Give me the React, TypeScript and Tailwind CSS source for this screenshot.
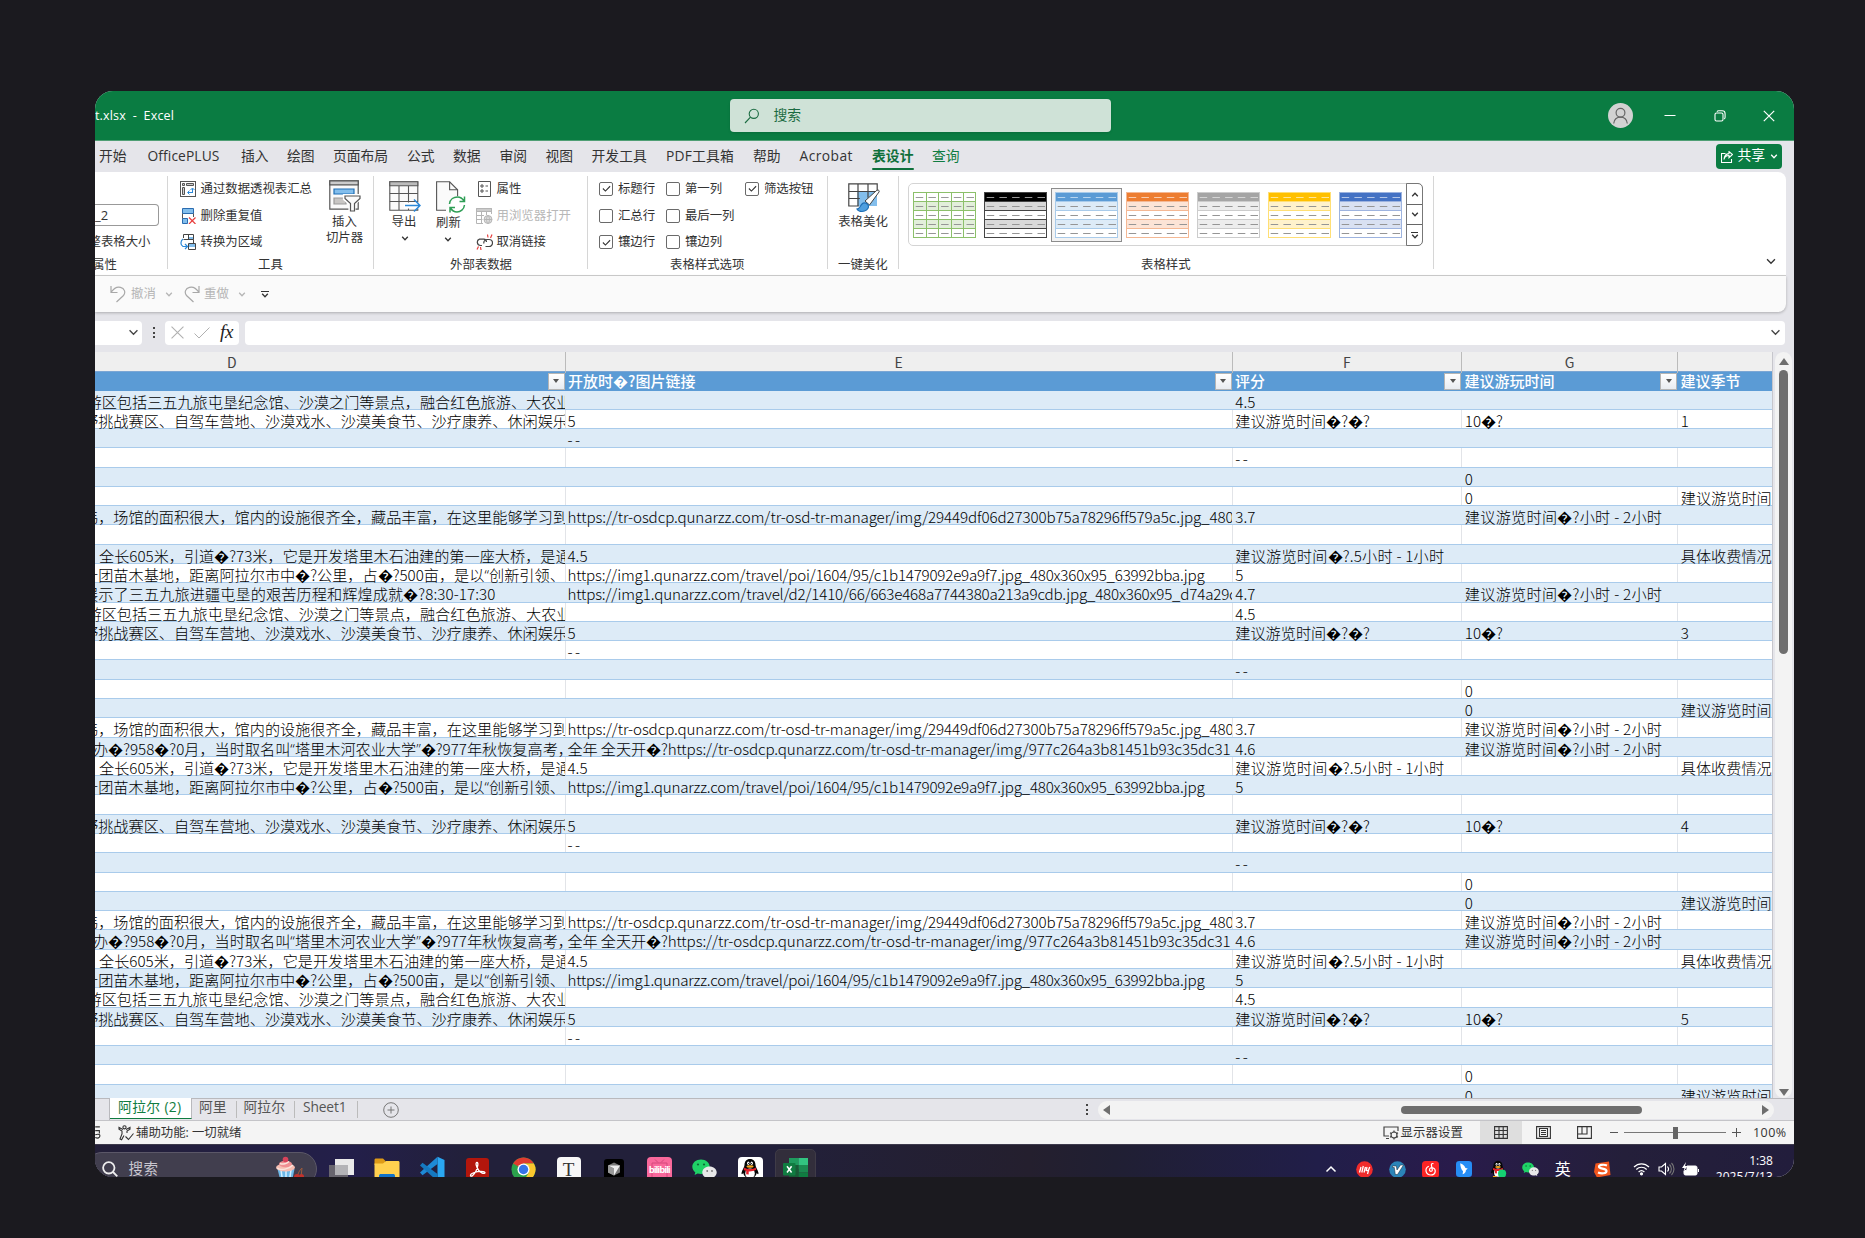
import React, { useLayoutEffect, useRef, useState } from "react";

/* Single-line text whose letter spacing is adjusted so that it is `w` pixels wide. */
function Fit({ w, children, className = "" }: { w: number; children: React.ReactNode; className?: string }) {
  const ref = useRef<HTMLSpanElement>(null);
  const [spacing, setSpacing] = useState(0);
  useLayoutEffect(() => {
    if (ref.current) {
      const natural = ref.current.getBoundingClientRect().width;
      setSpacing((w - natural) / Array.from(ref.current.textContent ?? "").length);
    }
  }, []);
  return (
    <span ref={ref} style={{ letterSpacing: spacing }} className={"inline-block whitespace-pre " + className}>
      {children}
    </span>
  );
}

const Chevron = ({ className = "" }: { className?: string }) => (
  <svg viewBox="0 0 12 8" className={className} fill="none" stroke="currentColor" strokeWidth="1.5">
    <path d="M1.5 1.5 6 6l4.5-4.5" />
  </svg>
);

const TinyChevron = ({ className = "" }: { className?: string }) => (
  <svg viewBox="0 0 8 5" className={"h-[5px] w-[8px] " + className} fill="none" stroke="currentColor" strokeWidth="1.300">
    <path d="M1.200.8 4 3.700 6.800.8" />
  </svg>
);

/* ---------- title bar ---------- */

function TitleBar() {
  return (
    <div className="flex h-[50px] shrink-0 items-center border-b border-[#4f9f75] bg-[#0a7c42] text-white">
      <div className="flex w-[635px] items-center pt-[1px] text-[12.500px] leading-5">
        <Fit w={79}>{"t.xlsx  -  Excel"}</Fit>
      </div>
      <div className="flex h-[33.5px] w-[381px] items-center rounded-[4px] bg-[#cfe2d7] pl-[14px] text-[#1a6b41] shadow-sm">
        <svg viewBox="0 0 16 16" className="mr-[13.5px] h-4 w-4" fill="none" stroke="currentColor" strokeWidth="1.1">
          <circle cx="9.8" cy="5.8" r="4.6" />
          <path d="M6.5 9.2 1 15" />
        </svg>
        <span className="pb-[2px] text-[13.8px] leading-5">搜索</span>
      </div>
      <div className="flex w-[683px] items-center pl-[497px] text-white">
        <svg viewBox="0 0 25 25" className="h-[25px] w-[25px]" fill="none" stroke="#666" strokeWidth="1.2">
          <circle cx="12.5" cy="12.5" r="12.5" fill="#d2d2d2" stroke="none" />
          <circle cx="12.5" cy="9.8" r="4.4" />
          <path d="M5.7 20.5c.5-4 3.200-6.300 6.800-6.300s6.300 2.300 6.800 6.300" />
        </svg>
        <svg viewBox="0 0 12 12" className="ml-[31px] h-3 w-3" fill="none" stroke="currentColor" strokeWidth="1.200">
          <path d="M.5 5.500h11" />
        </svg>
        <svg viewBox="0 0 12 12" className="ml-[38px] h-3 w-3" fill="none" stroke="currentColor" strokeWidth="1.100">
          <rect x="1" y="3" width="8" height="8" rx="1.500" />
          <path d="M3 1.800C3.400 1 4 .8 4.600.8h3.600c1.800 0 2.900 1.100 2.900 2.900v3.600c0 .7-.3 1.300-.9 1.600" />
        </svg>
        <svg viewBox="0 0 12 12" className="ml-[37px] h-3 w-3" fill="none" stroke="currentColor" strokeWidth="1.200">
          <path d="m.8.8 10.400 10.400M11.200.8.8 11.200" />
        </svg>
      </div>
    </div>
  );
}

/* ---------- ribbon tabs ---------- */

const tabs: { t: string; w: number; box: string }[] = [
  { t: "开始", w: 27.6, box: "w-[48.5px]" },
  { t: "OfficePLUS", w: 72, box: "w-[93.500px]" },
  { t: "插入", w: 27.600, box: "w-[46px]" },
  { t: "绘图", w: 27.600, box: "w-[46px]" },
  { t: "页面布局", w: 55, box: "w-[74px]" },
  { t: "公式", w: 27.600, box: "w-[46px]" },
  { t: "数据", w: 27.600, box: "w-[46.500px]" },
  { t: "审阅", w: 27.600, box: "w-[46px]" },
  { t: "视图", w: 27.600, box: "w-[46px]" },
  { t: "开发工具", w: 55.500, box: "w-[74.500px]" },
  { t: "PDF工具箱", w: 68, box: "w-[87px]" },
  { t: "帮助", w: 27.600, box: "w-[46.500px]" },
  { t: "Acrobat", w: 53.500, box: "w-[72.500px]" },
];

function TabRow() {
  return (
    <div className="flex h-[31px] shrink-0 items-center pl-[4px] text-[13.800px] leading-5 text-[#333]">
      {tabs.map((tab) => (
        <div key={tab.t} className={"shrink-0 pb-[2px] " + tab.box}>
          <Fit w={tab.w}>{tab.t}</Fit>
        </div>
      ))}
      <div className="relative w-[60px] pb-[2px] font-bold text-[#0f703b]">
        <Fit w={41.500}>表设计</Fit>
        <div className="absolute bottom-[-2px] left-0 h-[2px] w-[42px] rounded bg-[#0f703b]" />
      </div>
      <div className="pb-[2px] text-[#0f7c41]">
        <Fit w={27.600}>查询</Fit>
      </div>
      <div className="ml-auto mr-[12px] flex h-[25px] w-[66px] items-center rounded-[4px] bg-[#0a7c42] pl-[5px] text-white">
        <svg viewBox="0 0 12 12" className="mr-[4.500px] h-3 w-3" fill="none" stroke="currentColor" strokeWidth="1.100">
          <path d="M4.500 2.500h-4v9h10V8M3 8.500c.5-3 2-4 5-4V6.700l3.500-3.200L8 .6v2C5.300 2.800 3.300 4.500 3 8.500Z" />
        </svg>
        <span className="pb-[3px] leading-5">共享</span>
        <TinyChevron className="ml-[5px]" />
      </div>
    </div>
  );
}

/* ---------- ribbon icons ---------- */

const IconPivot = () => (
  <svg viewBox="0 0 16 16" className="h-4 w-4" fill="none" stroke="#555" strokeWidth="1">
    <rect x=".5" y=".5" width="15" height="15" />
    <path d="M2.500 2.500h2v2h-2zM6.500 2.500h7v2h-7zM2.500 6.500h2v7h-2z" fill="#ccc" />
    <path d="M12.500 12V7.500M10.500 9l2-2 2 2M12.500 11.500H8M9.500 9.700 7.500 11.500l2 2" stroke="#2b88d8" />
  </svg>
);
const IconDedupe = () => (
  <svg viewBox="0 0 16 16" className="h-4 w-4" fill="none" strokeWidth="1">
    <path d="M2.500.5h11v5h-11zM2.500 10.500h5v5h-5z" fill="#83beec" stroke="#2b6cb0" />
    <path d="M2.500 5.500v5M13.500 5.500V9" stroke="#555" />
    <path d="m9 9.500 6.500 6.500M15.500 9.500 9 16" stroke="#e8403f" strokeWidth="1.200" />
  </svg>
);
const IconConvert = () => (
  <svg viewBox="0 0 16 16" className="h-4 w-4" fill="none" stroke="#444" strokeWidth="1">
    <path d="M3.500 4V.5h10v5h-10M8.500.5v5M13.500 5.500v4M8.500 9.500h7v6h-7z" />
    <path d="M9 10h6v3H9zM9 3h4v2H9z" fill="#83beec" stroke="none" />
    <path d="M3 5C.3 7 .2 11 3 12.500h4M5 10l2.500 2.500L5 15" stroke="#2b88d8" strokeWidth="1.200" />
  </svg>
);
const IconSlicer = () => (
  <svg viewBox="0 0 32 32" className="h-8 w-8" fill="none" stroke="#555" strokeWidth="1.200">
    <path d="M.8.8h28.400v28.400H.8z" fill="#fafafa" />
    <path d="M.8.8h28.400v4H.8z" fill="#ccc" />
    <path d="M5 9h20v5H5z" fill="#83beec" stroke="#1f6fb5" />
    <path d="M5 18h12v6H5z" fill="#c8c6c4" stroke="#999" />
    <path d="M14.500 14.500h17v5l-5.500 4.500v8h-6v-8l-5.500-4.500z" fill="#fff" stroke="#fff" />
    <path d="M16 16h15v2.500l-5.500 5V31h-4v-7.500l-5.500-5z" fill="#fafafa" />
  </svg>
);
const IconExport = () => (
  <svg viewBox="0 0 32 32" className="h-8 w-8" fill="none" stroke="#555" strokeWidth="1.100">
    <path d="M.8.8h28v28.400H.8z" fill="#fafafa" />
    <path d="M.8.8h28v4H.8z" fill="#bbb" />
    <path d="M.8 12.500h28M.8 20.500h28M10 5v24M19.500 5v24" />
    <path d="M15 21.500h18v6H15z" fill="#fff" stroke="none" />
    <path d="M16 24.500h14.500M25 18.500l6 6-6 6" stroke="#2b88d8" strokeWidth="1.500" />
  </svg>
);
const IconRefresh = () => (
  <svg viewBox="0 0 32 32" className="h-8 w-8" fill="none" stroke="#555" strokeWidth="1.100">
    <path d="M12 29.200H2.600V.8h13l8 8V15" fill="#fafafa" />
    <path d="M15.600.8v8h8" />
    <path d="M15.500 23c.5-5 4.500-7 8-7 3 0 5 1.500 6.500 4M30.500 15.500V20.500h-5M30.500 24c-.5 4.500-4 7-7.500 7-3 0-5-1.500-6.500-4M16 31.500V26.500h5" stroke="#2f9e56" strokeWidth="1.500" />
  </svg>
);
const IconProps = () => (
  <svg viewBox="0 0 13 16" className="h-4 w-[13px]" fill="none" stroke="#555" strokeWidth="1">
    <path d="M.5.5h12v15H.5z" />
    <path d="M3 4h2v2H3zM3 9h2v2H3zM7.500 5H10M7.500 10H10" />
  </svg>
);
const IconBrowser = () => (
  <svg viewBox="0 0 17 16" className="h-4 w-[17px]" fill="none" stroke="#b5b5b5" strokeWidth="1">
    <path d="M7 15.500H.5V.5h15V6" />
    <path d="M.5.5h15v3H.5z" fill="#ccc" />
    <path d="M.5 7.500H8M.5 11.500h6M5.500 4v11M10.500 4v3" />
    <circle cx="12" cy="11.500" r="4" fill="#ddd" />
    <path d="M8 11.500h8M12 7.500c-2 2-2 6 0 8 2-2 2-6 0-8" />
  </svg>
);
const IconUnlink = () => (
  <svg viewBox="0 0 17 16" className="h-4 w-[17px]" fill="none" stroke="#444" strokeWidth="1.200">
    <path d="M6 11.500H4.500a3.300 3.300 0 0 1-1-6.400h4.200A3 3 0 0 1 10.500 8M8 9.500C7.300 7.500 9 5.500 11 5.500h2a3.200 3.200 0 0 1 0 7H9.500" />
    <path d="M12 3.500 11.500.5M14.500 4 16 .5M4.500 13 5 16M2.500 12.500 1 15.500" stroke="#e8403f" />
  </svg>
);
const IconBeautify = () => (
  <svg viewBox="0 0 32 30" className="h-[30px] w-8" fill="none" stroke="#444" strokeWidth="1.200">
    <path d="M9.500 8.500h19.500v14.500H9.500z" fill="#83beec" stroke="none" />
    <path d="M.8.8h28.400v7.700H.8zM.8 8.500v14.500h10M.8 15.500h11M10 .8v22M20 .8v14M29.200 1v8" />
    <path d="m17 18 11-10c1.500-1.500 4-1 3 1L21.500 22z" fill="#fff" strokeWidth="1" />
    <path d="M9 26c3 0 3-3 5-5s6-1 6.500 2-3 5.500-6.500 5.500c-2 0-4-.5-5-2.500Z" fill="#4f9fdf" stroke="#1f6fb5" />
  </svg>
);

/* ---------- ribbon groups ---------- */

const Label = ({ children, className = "" }: { children: string; className?: string }) => (
  <div className={"absolute bottom-[-5px] leading-[18px] " + className}>{children}</div>
);

const Small = ({ icon, text, w, muted }: { icon: React.ReactNode; text: string; w: number; muted?: boolean }) => (
  <div className={"flex h-[26.800px] items-center " + (muted ? "text-[#b8b8b8]" : "")}>
    <span className="flex w-[20.500px] shrink-0">{icon}</span>
    <Fit w={w}>{text}</Fit>
  </div>
);

const Check = ({ on, text, w }: { on?: boolean; text: string; w: number }) => (
  <div className="flex h-[26.800px] items-center">
    <span className="mr-[5px] flex h-[14px] w-[14px] shrink-0 items-center justify-center rounded-[2px] border border-[#6a6a6a] bg-white">
      {on && (
        <svg viewBox="0 0 10 10" className="h-[9px] w-[9px]" fill="none" stroke="#333" strokeWidth="1.200">
          <path d="m1 5 2.800 2.800L9 2.500" />
        </svg>
      )}
    </span>
    <Fit w={w}>{text}</Fit>
  </div>
);

type Swatch = { head: string; band: string; line: string; headDash: string; grid?: boolean };
const swatches: Swatch[] = [
  { head: "#ffffff", band: "#e2efda", line: "#8cc06a", headDash: "#999999", grid: true },
  { head: "#000000", band: "#d9d9d9", line: "#444444", headDash: "#999999" },
  { head: "#5b9bd5", band: "#ddebf7", line: "#a9cbea", headDash: "#b8d5ef" },
  { head: "#ed7d31", band: "#fce4d6", line: "#f4b894", headDash: "#f9cdb0" },
  { head: "#a5a5a5", band: "#ededed", line: "#cccccc", headDash: "#d5d5d5" },
  { head: "#ffc000", band: "#fff2cc", line: "#ffdf75", headDash: "#ffe699" },
  { head: "#4472c4", band: "#d9e1f2", line: "#9db3df", headDash: "#b4c6e7" },
];

function StyleThumb({ s }: { s: Swatch }) {
  return (
    <svg viewBox="0 0 63 46" className="h-[46px] w-[63px]">
      {[0, 1, 2, 3, 4].map((r) => (
        <g key={r}>
          <rect x="0" y={r * 9} width="63" height="9" fill={r === 0 ? s.head : r % 2 ? s.band : "#fff"} />
          {r > 0 && <rect x="0" y={r * 9} width="63" height="1" fill={s.line} />}
          {[0, 1, 2, 3, 4].map((c) => (
            <rect key={c} x={c * 12.700 + 2.700} y={r * 9 + 5} width="7.500" height="1" fill={r === 0 ? s.headDash : "#959595"} />
          ))}
        </g>
      ))}
      {s.grid && <path d="M13.500 0v46M25.500 0v46M38.500 0v46M50.500 0v46" stroke={s.line} />}
      <rect x=".5" y=".5" width="62" height="45" fill="none" stroke={s.line} />
    </svg>
  );
}

function Ribbon() {
  const group = "relative shrink-0 border-r border-[#d6d6d6]";
  return (
    <div className="mr-[8px] flex h-[104px] shrink-0 rounded-tr-[8px] border-b border-[#d0d0d0] bg-white pb-[6px] pt-[4px] text-[12.400px] leading-[18px] text-[#333]">
      <div className={group + " w-[73px]"}>
        <div className="mt-[28px] flex h-[22px] w-[64px] items-center rounded-r-[4px] border border-l-0 border-[#999] text-[13px]">
          _2
        </div>
        <div className="mt-[7px] flex w-[55.500px] justify-end overflow-hidden">
          <Fit w={62}>整表格大小</Fit>
        </div>
        <Label className="left-[-3px]">属性</Label>
      </div>
      <div className={group + " flex w-[206px] pl-[12px]"}>
        <div className="w-[145.500px] -mt-[0.500px]">
          <Small icon={<IconPivot />} text="通过数据透视表汇总" w={111.500} />
          <Small icon={<IconDedupe />} text="删除重复值" w={62} />
          <Small icon={<IconConvert />} text="转换为区域" w={62} />
        </div>
        <div className="flex w-[38px] flex-col items-center pt-[4px] text-center leading-[16px]">
          <IconSlicer />
          <div className="w-[40px] pt-[2px]">插入<br />切片器</div>
        </div>
        <Label className="left-[90px]">工具</Label>
      </div>
      <div className={group + " flex w-[214px] pl-[15px]"}>
        <div className="flex w-[31px] flex-col items-center pt-[4.500px]">
          <IconExport />
          <span className="pr-[1px]">导出</span>
          <TinyChevron className="mt-[5px]" />
        </div>
        <div className="ml-[14px] flex w-[32px] flex-col items-center pt-[4.500px]">
          <IconRefresh />
          <span className="pr-[3px] pt-[1px]">刷新</span>
          <TinyChevron className="mr-[4px] mt-[5px]" />
        </div>
        <div className="-mt-[0.500px] ml-[10px]">
          <Small icon={<span className="pl-[2px]"><IconProps /></span>} text="属性" w={24.800} />
          <Small icon={<IconBrowser />} text="用浏览器打开" w={74.500} muted />
          <Small icon={<IconUnlink />} text="取消链接" w={49.500} />
        </div>
        <Label className="left-[76px]">外部表数据</Label>
      </div>
      <div className={group + " flex w-[240px] pl-[11px]"}>
        <div className="-mt-[0.500px] w-[67px]">
          <Check on text="标题行" w={37} />
          <Check text="汇总行" w={37} />
          <Check on text="镶边行" w={37} />
        </div>
        <div className="-mt-[0.500px] w-[79px]">
          <Check text="第一列" w={37} />
          <Check text="最后一列" w={49.500} />
          <Check text="镶边列" w={37} />
        </div>
        <div className="-mt-[0.500px]">
          <Check on text="筛选按钮" w={49.500} />
        </div>
        <Label className="left-[82px]">表格样式选项</Label>
      </div>
      <div className={group + " flex w-[71px] flex-col items-center pt-[7px]"}>
        <span className="pl-[2px]"><IconBeautify /></span>
        <span>表格美化</span>
        <Label className="left-[10px]">一键美化</Label>
      </div>
      <div className={group + " w-[535px] pl-[9px] pt-[7px]"}>
        <div className="flex h-[63px] w-[515px] rounded-[5px] border border-[#d4d4d4]">
          <div className="flex w-[498px] items-center">
            {swatches.map((s, i) => (
              <div
                key={s.head}
                className={
                  "flex h-[54px] w-[71px] items-center justify-center border " +
                  (i === 2 ? "border-[#8c8c8c] bg-[#f3f3f3]" : "border-transparent")
                }
              >
                <StyleThumb s={s} />
              </div>
            ))}
          </div>
          <div className="-m-px w-[17px] divide-y divide-[#666] rounded-r-[5px] border border-[#777]">
            <div className="flex h-[21px] items-center justify-center"><TinyChevron className="rotate-180" /></div>
            <div className="flex h-[20px] items-center justify-center"><TinyChevron /></div>
            <div className="flex h-[20px] flex-col items-center justify-center">
              <div className="mb-[1px] h-[1px] w-[7px] bg-[#333]" />
              <TinyChevron />
            </div>
          </div>
        </div>
        <Label className="left-[242px]">表格样式</Label>
      </div>
      <div className="flex grow items-end justify-end pb-[4px] pr-[9px]">
        <Chevron className="h-[7px] w-[12px]" />
      </div>
    </div>
  );
}

function QuickAccess() {
  return (
    <div className="mr-[8px] flex h-[36px] shrink-0 items-center rounded-br-[8px] bg-[#fafafa] pl-[15px] text-[12.400px] leading-[18px] text-[#b5b5b5] shadow-[0_1px_3px_rgba(0,0,0,0.25)]">
      <svg viewBox="0 0 16 18" className="mr-[5px] h-[18px] w-4" fill="none" stroke="#a8a8a8" strokeWidth="1.200">
        <path d="M1 1v6.500h6.500M1.300 7C4 3 7.500 1.500 10.500 2.300c4 1 5.500 5.200 3 8.200L6.500 17" />
      </svg>
      <Fit w={25} className="pb-[1px]">撤消</Fit>
      <TinyChevron className="ml-[9px]" />
      <svg viewBox="0 0 16 18" className="ml-[10.500px] mr-[4.500px] h-[18px] w-4" fill="none" stroke="#a8a8a8" strokeWidth="1.200">
        <path d="M15 1v6.500H8.500M14.700 7C12 3 8.500 1.500 5.500 2.300c-4 1-5.500 5.200-3 8.200L9.500 17" />
      </svg>
      <Fit w={25} className="pb-[1px]">重做</Fit>
      <TinyChevron className="ml-[9px]" />
      <div className="ml-[14.500px] flex flex-col items-center text-[#333]">
        <div className="mb-[1px] h-[1px] w-[8px] bg-[#333]" />
        <TinyChevron />
      </div>
    </div>
  );
}

function FormulaBar() {
  return (
    <div className="flex h-[40px] shrink-0 items-center pt-[1px] text-[#444]">
      <div className="flex h-[24px] w-[47px] items-center justify-end rounded-r-[4px] bg-white pr-[3px]">
        <Chevron className="h-[7px] w-[11px]" />
      </div>
      <div className="flex w-[23px] flex-col items-center gap-[2.500px]">
        <i className="h-[2px] w-[2px] bg-[#444]" />
        <i className="h-[2px] w-[2px] bg-[#444]" />
        <i className="h-[2px] w-[2px] bg-[#444]" />
      </div>
      <div className="flex h-[24px] w-[74px] items-center rounded-[4px] bg-white pl-[6px]">
        <svg viewBox="0 0 12 12" className="h-[13px] w-[13px]" fill="none" stroke="#b0b0b0" strokeWidth="1"><path d="m.5.5 11 11m0-11-11 11" /></svg>
        <svg viewBox="0 0 16 12" className="ml-[10px] h-[12px] w-[16px]" fill="none" stroke="#b0b0b0" strokeWidth="1"><path d="m.5 6.500 4.500 4.500L15.500.5" /></svg>
        <span className="ml-[10px] pb-[1px] font-['Liberation_Serif',serif] text-[19px] italic leading-5 tracking-[-0.200px] text-[#222]">fx</span>
      </div>
      <div className="ml-[6px] mr-[9px] flex h-[24px] grow items-center justify-end rounded-[4px] bg-white pr-[4px]">
        <Chevron className="h-[7px] w-[11px]" />
      </div>
    </div>
  );
}

/* ---------- sheet ---------- */

const park = "游区包括三五九旅屯垦纪念馆、沙漠之门等景点，融合红色旅游、大农业";
const race = "野挑战赛区、自驾车营地、沙漠戏水、沙漠美食节、沙疗康养、休闲娱乐";
const museum = "伟，场馆的面积很大，馆内的设施很齐全，藏品丰富，在这里能够学习到";
const bridge = "全长605米，引道\uFFFD?73米，它是开发塔里木石油建的第一座大桥，是通";
const nursery = "十团苗木基地，距离阿拉尔市中\uFFFD?公里，占\uFFFD?500亩，是以“创新引领、";
const history = "展示了三五九旅进疆屯垦的艰苦历程和辉煌成就\uFFFD?8:30-17:30";
const college = "办\uFFFD?958\uFFFD?0月，当时取名叫“塔里木河农业大学”\uFFFD?977年秋恢复高考，";
const shift: Record<string, string> = {
  [park]: "-ml-[8.500px]",
  [race]: "-ml-[12px]",
  [museum]: "-ml-[12px]",
  [bridge]: "ml-[4px]",
  [nursery]: "-ml-[12px]",
  [history]: "-ml-[12px]",
  [college]: "-ml-[2px]",
};
const url1 = "https://tr-osdcp.qunarzz.com/tr-osd-tr-manager/img/29449df06d27300b75a78296ff579a5c.jpg_480";
const url2 = "https://img1.qunarzz.com/travel/poi/1604/95/c1b1479092e9a9f7.jpg_480x360x95_63992bba.jpg";
const url3 = "https://img1.qunarzz.com/travel/d2/1410/66/663e468a7744380a213a9cdb.jpg_480x360x95_d74a29c";
const url4 = "全年 全天开\uFFFD?https://tr-osdcp.qunarzz.com/tr-osd-tr-manager/img/977c264a3b81451b93c35dc31";

const q = "建议游览时间\uFFFD?\uFFFD?";
const half = "建议游览时间\uFFFD?.5小时 - 1小时";
const two = "建议游览时间\uFFFD?小时 - 2小时";
const tip = "建议游览时间";
const fee = "具体收费情况";
const ten = "10\uFFFD?";

const widths: Record<string, number> = {
  [url1]: 666, [url2]: 637, [url3]: 669, [url4]: 663, [college]: 480, [history]: 412.5, [two]: 197.5, [half]: 209, "--": 15,
};

type Row = [string, string, string, string, string];
const rows: Row[] = [
  [park, "", "4.5", "", ""],
  [race, "5", q, ten, "1"],
  ["", "--", "", "", ""],
  ["", "", "--", "", ""],
  ["", "", "", "0", ""],
  ["", "", "", "0", tip],
  [museum, url1, "3.7", two, ""],
  ["", "", "", "", ""],
  [bridge, "4.5", half, "", fee],
  [nursery, url2, "5", "", ""],
  [history, url3, "4.7", two, ""],
  [park, "", "4.5", "", ""],
  [race, "5", q, ten, "3"],
  ["", "--", "", "", ""],
  ["", "", "--", "", ""],
  ["", "", "", "0", ""],
  ["", "", "", "0", tip],
  [museum, url1, "3.7", two, ""],
  [college, url4, "4.6", two, ""],
  [bridge, "4.5", half, "", fee],
  [nursery, url2, "5", "", ""],
  ["", "", "", "", ""],
  [race, "5", q, ten, "4"],
  ["", "--", "", "", ""],
  ["", "", "--", "", ""],
  ["", "", "", "0", ""],
  ["", "", "", "0", tip],
  [museum, url1, "3.7", two, ""],
  [college, url4, "4.6", two, ""],
  [bridge, "4.5", half, "", fee],
  [nursery, url2, "5", "", ""],
  [park, "", "4.5", "", ""],
  [race, "5", q, ten, "5"],
  ["", "--", "", "", ""],
  ["", "", "--", "", ""],
  ["", "", "", "0", ""],
  ["", "", "", "0", tip],
];

const cols = "grid grid-cols-[470.500px_667px_229.500px_216px_95px]";

/* Curly quotes are set in a Latin face so that they stay narrow between ideographs. */
const withQuotes = (s: string) =>
  s.split(/([“”])/).map((part, i) =>
    part === "“" || part === "”" ? <span key={i} className="font-['Open_Sans',sans-serif]">{part}</span> : part
  );

const headers = ["", "开放时\uFFFD?图片链接", "评分", "建议游玩时间", "建议季节"];

function Sheet() {
  return (
    <div className="h-[746px] w-[1678px] shrink-0 overflow-hidden border-r border-[#c6c6cc] bg-white font-['Noto_Sans_CJK_SC',sans-serif]">
      <div className={cols + " h-[19px] bg-[#efefef] text-center text-[14px] leading-[21px] text-[#444]"}>
        <div className="border-r border-[#bbb] pr-[196px]">D</div>
        <div className="border-r border-[#bbb]">E</div>
        <div className="border-r border-[#bbb]">F</div>
        <div className="border-r border-[#bbb]">G</div>
        <div />
      </div>
      <div className={cols + " h-[19.500px] border-t border-[#7ba6d4] bg-[#5b9bd5] text-[15px] font-medium text-white"}>
        {headers.map((h, i) => (
          <div key={i} className="flex items-center justify-between overflow-x-clip pl-[2.500px] pr-[1px]">
            <span className="whitespace-nowrap leading-[18px]">{h}</span>
            {i < 4 && (
              <span className="flex h-[17px] w-[17px] items-center justify-center border border-[#b5b5b5] bg-gradient-to-b from-white to-[#e9ecf1]">
                <i className="h-0 w-0 border-x-[3.500px] border-t-[4px] border-x-transparent border-t-[#555]" />
              </span>
            )}
          </div>
        ))}
      </div>
      {rows.map((row, r) => {
        const band = r % 2 === 0;
        return (
          <div
            key={r}
            className={cols + " h-[19.285px] border-b border-[#a9cbeb] text-[15.170px] font-light leading-[20px] text-[#000] " + (band ? "bg-[#ddebf7]" : "bg-white")}
          >
            {row.map((text, c) => (
              <div
                key={c}
                className={
                  "h-full min-h-0 overflow-x-clip whitespace-nowrap border-r " +
                  (c === 0 ? "" : c === 1 ? "pl-[2px] " : "pl-[2.800px] ") +
                  (band ? "border-transparent" : "border-[#e2e4e8]")
                }
              >
                <div className={"h-[18px] " + (shift[text] ?? "")}>
                  {widths[text] ? <Fit w={widths[text]}>{withQuotes(text)}</Fit> : withQuotes(text)}
                </div>
              </div>
            ))}
          </div>
        );
      })}
    </div>
  );
}

function SheetArea() {
  return (
    <div className="flex shrink-0">
      <Sheet />
      <div className="ml-[2px] flex h-[746px] w-[17px] flex-col items-center rounded-full bg-[#f3f3f3] pb-[2.500px] pt-[6px]">
        <i className="h-0 w-0 border-x-[5px] border-b-[7px] border-x-transparent border-b-[#6e6e6e]" />
        <div className="mt-[5px] h-[284px] w-[9px] rounded-full bg-[#6e6e6e]" />
        <i className="mt-auto h-0 w-0 border-x-[5px] border-t-[7px] border-x-transparent border-t-[#6e6e6e]" />
      </div>
    </div>
  );
}

function SheetTabs() {
  return (
    <div className="flex h-[23px] shrink-0 border-b border-[#c4c4c8] text-[13.800px] leading-[18px] text-[#555]">
      <div className="w-[15px] border-r border-t border-[#b9b9bd]" />
      <div className="h-[21px] w-[82px] border-b border-r border-b-[#107c41] border-r-[#b9b9bd] bg-white pl-[8px] leading-[17px] text-[#107c41]">
        <Fit w={63.500}>阿拉尔 (2)</Fit>
      </div>
      <div className="flex grow border-t border-[#b9b9bd]">
        <div className="w-[43.500px] pl-[7px] leading-[15px]"><Fit w={27.600}>阿里</Fit></div>
        <div className="my-[2px] w-[58px] border-l border-[#bbb] pl-[7px] leading-[11px]"><Fit w={41.500}>阿拉尔</Fit></div>
        <div className="my-[2px] w-[64px] border-x border-[#bbb] pl-[8.500px] leading-[11px]"><Fit w={43.500}>Sheet1</Fit></div>
        <svg viewBox="0 0 16 16" className="ml-[25px] mt-[3px] h-4 w-4" fill="none" stroke="#777" strokeWidth="1">
          <circle cx="8" cy="8" r="7.300" />
          <path d="M8 4.500v7M4.500 8h7" />
        </svg>
        <div className="ml-[687px] flex flex-col gap-[2.500px] pt-[5px]">
          <i className="h-[2px] w-[2px] bg-[#444]" />
          <i className="h-[2px] w-[2px] bg-[#444]" />
          <i className="h-[2px] w-[2px] bg-[#444]" />
        </div>
        <div className="ml-[10px] mt-[2px] flex h-[18px] w-[676px] items-center rounded-full bg-[#f3f3f3] pl-[5.500px] pr-[4.500px]">
          <i className="h-0 w-0 border-y-[5px] border-r-[7px] border-y-transparent border-r-[#6e6e6e]" />
          <div className="ml-[291px] h-[8.500px] w-[241px] rounded-full bg-[#6e6e6e]" />
          <i className="ml-auto h-0 w-0 border-y-[5px] border-l-[7px] border-y-transparent border-l-[#6e6e6e]" />
        </div>
      </div>
    </div>
  );
}

function StatusBar() {
  return (
    <div className="flex h-[23px] shrink-0 items-center bg-[#f4f4f4] text-[12.400px] leading-[18px] text-[#333]">
      <svg viewBox="0 0 6 14" className="h-[13px] w-[6px]" fill="none" stroke="#333" strokeWidth="1.200">
        <path d="M0 1h5M0 5h4.500v3M0 9.500c4-1.500 6 0 4.500 2.500-1 1.300-3 1.200-4.500.5" />
      </svg>
      <svg viewBox="0 0 16 16" className="ml-[17px] h-4 w-4" fill="none" stroke="#333" strokeWidth="1.100">
        <circle cx="6.500" cy="2.300" r="1.600" />
        <path d="M5 4.500 1 2.500v1.800l3 1.700v3L2 14l1.600.8L6 10.500M8 4.500l4-2v1.800L9 6v2M7.500 11.500l3 3 5-6" />
      </svg>
      <span className="ml-[2px] pt-[1px]"><Fit w={105.500}>辅助功能: 一切就绪</Fit></span>
      <svg viewBox="0 0 16 14" className="ml-[1141px] h-[14px] w-4" fill="none" stroke="#444" strokeWidth="1.200">
        <path d="M6 10H1V1h14v4M3 12.500h3" />
        <circle cx="11" cy="9" r="3" />
        <path d="M11 4.500v2M11 11.500v2M7 6.800l1.500.8M13.500 10.400l1.500.8M15 6.800l-1.500.8M8.500 10.400l-1.500.8" />
      </svg>
      <span className="ml-[2px] pt-[1px]"><Fit w={62.500}>显示器设置</Fit></span>
      <div className="ml-[17px] flex h-full w-[42px] items-center justify-center bg-[#dedede]">
        <svg viewBox="0 0 14 13" className="h-[13px] w-[14px]" fill="none" stroke="#333" strokeWidth="1.100">
          <path d="M.6.6h12.800v11.800H.6zM5 .6v12M9.200.6v12M.6 4.500h13M.6 8.500h13" />
        </svg>
      </div>
      <svg viewBox="0 0 15 13" className="ml-[13.500px] h-[13px] w-[15px]" fill="none" stroke="#333" strokeWidth="1.100">
        <path d="M.6.6h13.800v11.800H.6zM3.500 2.500h8v8h-8zM5 4.500h5M5 6.500h5M5 8.500h5" />
      </svg>
      <svg viewBox="0 0 15 13" className="ml-[26.500px] h-[13px] w-[15px]" fill="none" stroke="#333" strokeWidth="1.100">
        <path d="M.6.6h13.800v11.800H.6zM5 .6v7.400h5V.6M10 8V.6M.6 8H5" />
      </svg>
      <div className="ml-[18px] h-px w-[8px] bg-[#555]" />
      <div className="ml-[6px] flex h-[12px] w-[102px] items-center">
        <div className="h-px w-[49px] bg-[#777]" />
        <div className="h-[12px] w-[5px] bg-[#666]" />
        <div className="h-px grow bg-[#777]" />
      </div>
      <svg viewBox="0 0 9 9" className="ml-[5.500px] h-[9px] w-[9px]" stroke="#555"><path d="M4.500 0v9M0 4.500h9" /></svg>
      <span className="ml-[12.500px] pt-[1px]"><Fit w={33.500} className="text-[12.500px]">100%</Fit></span>
    </div>
  );
}

/* ---------- taskbar ---------- */

const Cell = ({ children }: { children: React.ReactNode }) => (
  <div className="flex h-[46px] w-[45.400px] shrink-0 items-center justify-center">{children}</div>
);

const Wechat = ({ className }: { className: string }) => (
  <svg viewBox="0 0 25 20" className={className}>
    <path d="M9 .5C4 .5.300 3.700.300 7.800c0 2.200 1.200 4.200 3 5.500l-.7 2.700 3-1.500c1 .3 2.200.5 3.400.5 5 0 8.700-3.200 8.700-7.200S14 .5 9 .5Z" fill="#1fd267" />
    <circle cx="6" cy="5.500" r="1.100" fill="#0d6b35" /><circle cx="12" cy="5.500" r="1.100" fill="#0d6b35" />
    <path d="M17.500 7.500c-4 0-7.200 2.600-7.200 6s3.200 6 7.200 6c1 0 1.900-.1 2.700-.4l2.300 1.200-.5-2.200c1.600-1.100 2.700-2.700 2.700-4.600 0-3.400-3.200-6-7.200-6Z" fill="#e8e8e8" />
    <circle cx="15.200" cy="12" r=".9" fill="#777" /><circle cx="20" cy="12" r=".9" fill="#777" />
  </svg>
);

const Penguin = ({ className, badge }: { className: string; badge?: boolean }) => (
  <svg viewBox="0 0 20 22" className={className}>
    <path d="M10 1c-3.500 0-5.500 2.600-5.500 6 0 2-2.500 5-3 8-.2 1.500.8 1.500 1.800 0 .5 3 2.500 5 6.700 5s6.200-2 6.700-5c1 1.500 2 1.500 1.800 0-.5-3-3-6-3-8 0-3.400-2-6-5.500-6Z" fill="#050505" />
    <ellipse cx="10" cy="15.500" rx="4.800" ry="5" fill="#fff" />
    <ellipse cx="8.300" cy="5.300" rx="1.200" ry="1.700" fill="#fff" /><ellipse cx="11.700" cy="5.300" rx="1.200" ry="1.700" fill="#fff" />
    <circle cx="8.600" cy="5.500" r=".6" /><circle cx="11.400" cy="5.500" r=".6" />
    <ellipse cx="10" cy="8.500" rx="3.500" ry="1.200" fill="#f5a81c" />
    <path d="M4.300 9.500c3 2 8.400 2 11.400 0l.5 2.300c-2 1.300-5 1.700-7.500 1.600v3.100l-2.500-.3v-3.300c-1-.2-1.800-.6-2.500-1Z" fill="#e5202b" />
    <path d="M4 19.500h4.500v2H3.500zM11.500 19.500H16l.5 2h-5z" fill="#f5a81c" />
    {badge && <circle cx="15" cy="16.500" r="5" fill="#15d072" />}
  </svg>
);

function Taskbar() {
  return (
    <div className="h-[33px] shrink-0 overflow-hidden border-t border-[#3d3a4c] bg-[linear-gradient(90deg,#231f38_0%,#231f4a_15%,#22203a_22%,#22203a_40%,#241f2e_55%,#201f33_60%,#211e49_72%,#291b4b_80%,#241f3a_90%,#221d3c_100%)]">
      <div className="flex h-[48px] items-center text-white">
        <div className="-ml-[10px] flex h-[34px] w-[232px] shrink-0 items-center rounded-full border border-[#5b5768] bg-[#413e4e] pl-[16px]">
          <svg viewBox="0 0 16 16" className="h-4 w-4" fill="none" stroke="#eee" strokeWidth="1.800">
            <circle cx="6.800" cy="6.800" r="5.700" /><path d="m11 11 4.300 4.300" />
          </svg>
          <Fit w={30} className="ml-[10.500px] pb-[1px] text-[14.500px] leading-5 text-[#c9c7d0]">搜索</Fit>
          <svg viewBox="0 0 30 26" className="ml-auto mr-[12px] h-[26px] w-[30px]">
            <path d="M3.500 13h17l-2.500 12H6.500Z" fill="#6db9e8" />
            <path d="M7 14l1.500 10M12 14v10M17 14l-1.500 10" stroke="#d7f0ff" strokeWidth="1.500" />
            <ellipse cx="11.500" cy="11.500" rx="9.500" ry="4" fill="#f6bdb2" />
            <ellipse cx="11.500" cy="8" rx="6.500" ry="3.300" fill="#ef8f92" />
            <path d="M3 12c4 3 12 1 16-3M6 7.500c3 1.500 7 0 9-2" fill="none" stroke="#fbe4dc" strokeWidth="1.500" />
            <circle cx="11.500" cy="3.500" r="2.800" fill="#d8435b" />
            <path d="M28 12c-3 3-4 5-4.500 9M28 12l-1 9" stroke="#9b5a3c" fill="none" />
            <circle cx="23" cy="21" r="3" fill="#c2332d" /><circle cx="27.500" cy="20.500" r="2.500" fill="#c2332d" />
          </svg>
        </div>
        <div className="ml-[2px] flex shrink-0">
          <Cell>
            <svg viewBox="0 0 25 22" className="h-[22px] w-[25px]">
              <path d="M0 7h19v15H0z" fill="#68656e" /><path d="M6 1h19v16H6z" fill="#e9e9e9" /><path d="M6 7h13v10H6z" fill="#b3b3b6" />
            </svg>
          </Cell>
          <Cell>
            <svg viewBox="0 0 26 22" className="h-[22px] w-[26px]">
              <path d="M.5 2c0-1 .5-1.500 1.500-1.500h7L11.500 3v4H.5z" fill="#dd9a17" />
              <path d="M.5 5.500H9L12 3h12c1 0 1.500.5 1.500 1.500V20c0 1-.5 1.500-1.500 1.500H2C1 21.500.5 21 .5 20Z" fill="#ffd04f" />
              <path d="M5 21.500V18c0-1.500.8-2 2-2h12c1.200 0 2 .5 2 2v3.500z" fill="#1273c9" />
            </svg>
          </Cell>
          <Cell>
            <svg viewBox="0 0 26 26" className="h-[26px] w-[26px]">
              <path d="M18.500.8 25.500 4v18l-7 3.200z" fill="#2aa7f2" />
              <path d="M18.500.8 1 16.500l2.500 2.700L18.500 8z" fill="#1e8ad6" />
              <path d="M18.500 25.200 1 9.500l2.500-2.700L18.500 18z" fill="#1579c0" />
            </svg>
          </Cell>
          <Cell>
            <svg viewBox="0 0 23 23" className="h-[23px] w-[23px]">
              <rect width="23" height="23" rx="3" fill="#b3160c" />
              <path d="M11 4.500c-1.700 0-1 4 1.800 8 2 2.800 5 3.500 6 2.500 1-1.200-3-2.300-7.300-1.300-4 .9-7.300 2.500-7 4 .4 1.700 3.500-.8 5.500-4.700 2-4 2.500-8.500 1-8.500Z" fill="none" stroke="#fff" strokeWidth="1.300" />
            </svg>
          </Cell>
          <Cell>
            <svg viewBox="0 0 26 26" className="h-[25px] w-[25px]">
              <circle cx="13" cy="13" r="12.500" fill="#2ba24c" />
              <path d="M13 13 2.200 6.700A12.500 12.500 0 0 1 23.800 6.700H13Z" fill="#df3b2f" />
              <path d="M13 6.700h10.800A12.500 12.500 0 0 1 13 25.500l5.500-9.300Z" fill="#fbc72d" />
              <circle cx="13" cy="13" r="6.300" fill="#fff" /><circle cx="13" cy="13" r="4.900" fill="#3674e8" />
            </svg>
          </Cell>
          <Cell>
            <div className="flex h-[24px] w-[24px] items-center justify-center rounded-[4px] bg-[#f7f7f7] font-['Liberation_Serif',serif] text-[19px] leading-none text-[#333]">T</div>
          </Cell>
          <Cell>
            <svg viewBox="0 0 20 20" className="h-[20px] w-[20px]">
              <rect width="20" height="20" rx="3" fill="#000" />
              <path d="m10 3.500 6 3v7l-6 3-6-3v-7z" fill="#777" /><path d="m4 6.500 12 0-6 10V9.500z" fill="#eee" /><path d="m4 6.500 6 3v7l-6-3z" fill="#999" />
            </svg>
          </Cell>
          <Cell>
            <div className="relative flex h-[25px] w-[25px] items-center justify-center rounded-[4px] bg-[#f9689b]">
              <svg viewBox="0 0 25 25" className="absolute h-[25px] w-[25px]" fill="none" stroke="#d5487c"><path d="m8 2.500 3 3M17 2.500l-3 3M5 6h15v15H5z" /></svg>
              <Fit w={21} className="relative font-['Inter',sans-serif] text-[9px] font-bold leading-none">bilibili</Fit>
            </div>
          </Cell>
          <Cell><Wechat className="h-[20px] w-[25px]" /></Cell>
          <Cell>
            <div className="flex h-[25px] w-[25px] items-center justify-center rounded-[4px] bg-white"><Penguin className="h-[22px] w-[20px]" /></div>
          </Cell>
          <Cell>
            <div className="flex h-[40px] w-[41px] items-center justify-center rounded-[5px] border border-[#3f3b47] bg-[#322e3b]">
              <svg viewBox="0 0 25 22" className="h-[22px] w-[25px]">
                <path d="M6 0h9.500v11H6z" fill="#1f9c5e" /><path d="M15.500 0H25v7h-9.500z" fill="#33c481" /><path d="M15.500 7H25v7.500h-9.500z" fill="#1b8a51" /><path d="M6 7h9.500v15H6z" fill="#185c37" /><path d="M15.500 14.500H25V22h-9.500z" fill="#107c41" />
                <rect y="5" width="12.500" height="12.500" rx="1" fill="#107c41" />
                <path d="m4 8.200 4.600 6.300M8.600 8.200 4 14.500" stroke="#fff" strokeWidth="1.500" />
              </svg>
            </div>
          </Cell>
        </div>
        <div className="ml-[507px] flex shrink-0 items-center">
          <Chevron className="h-[8px] w-[12px] rotate-180" />
          <svg viewBox="0 0 17 17" className="ml-[19px] h-[17px] w-[17px]">
            <circle cx="8.500" cy="8.500" r="8.300" fill="#f02b2b" />
            <path d="M3.500 11.500 5 6M5.800 11.500 7.300 5M8 11.500 9.500 6M11 6l-.7 3.500 2 .3L13.700 6M12.500 9.500l-1 3.500" stroke="#fff" strokeWidth="1.300" fill="none" />
          </svg>
          <svg viewBox="0 0 17 17" className="ml-[16px] h-[17px] w-[17px]">
            <circle cx="8.500" cy="8.500" r="8.300" fill="#2b84b8" />
            <path d="M3.500 5h3.800l.7 4 3.500-5h3L8.500 13.500H6.300L5.300 6.500H3.500Z" fill="#fff" stroke="#123" strokeWidth=".5" />
          </svg>
          <svg viewBox="0 0 17 17" className="ml-[16px] h-[17px] w-[17px]">
            <rect width="17" height="17" rx="3.500" fill="#fb2424" />
            <path d="M11.500 2.800c-1.200-.7-2.300 0-2.100 1.300l.9 4.500c.3 2-2.600 2.300-2.800.5-.2-1.900 2-2.900 3.700-2.100 3.300 1.500 2.600 7-2.200 7-5.700 0-6.700-6.700-2.200-8.700" fill="none" stroke="#fff" strokeWidth="1.200" />
          </svg>
          <svg viewBox="0 0 17 17" className="ml-[17px] h-[16px] w-[16px]">
            <rect width="17" height="17" rx="3.500" fill="#268df5" />
            <path d="M4.500 2.500C8 4 9.500 5.500 10 7.500l2.500.5-2 1.700c0 2.300-1.300 3.600-3.500 4.300L7.500 11C5.500 9 4.500 6 4.500 2.500Z" fill="#fff" />
          </svg>
          <Penguin className="ml-[17px] h-[18px] w-[18px]" badge />
          <Wechat className="ml-[14.500px] h-[14px] w-[17px]" />
          <span className="ml-[16px] pb-[1px] text-[16px] leading-5">英</span>
          <svg viewBox="0 0 17 17" className="ml-[23px] h-[17px] w-[17px]">
            <path d="M1.500 2.500 15 .5l1.500 13.500L3 16.500 0 11Z" fill="#f0561d" />
            <path d="M13 4.500c-3-1.200-8-1-8 1.200C5 8.200 12.500 7 12.500 10c0 2.500-5 3-8.500 1.500" fill="none" stroke="#fff" strokeWidth="2.200" />
          </svg>
          <svg viewBox="0 0 17 14" className="ml-[22px] h-[14px] w-[17px]" fill="none" stroke="#fff" strokeWidth="1.200">
            <path d="M1 5c4.300-4.300 10.700-4.300 15 0M3.300 7.500c3-3 7.400-3 10.400 0M5.600 10c1.700-1.700 4.100-1.700 5.800 0" /><circle cx="8.500" cy="11.800" r="1" fill="#fff" />
          </svg>
          <svg viewBox="0 0 17 14" className="ml-[8px] h-[14px] w-[17px]" fill="none" stroke="#fff" strokeWidth="1.100">
            <path d="M1 5h2.500L7.500 1.500v11L3.500 9H1ZM9.500 4.500c1.300 1.500 1.300 3.500 0 5" /><path d="M11.500 2.500c2.500 2.600 2.500 6.400 0 9M13.500 1c3.300 3.500 3.300 8.500 0 12" stroke="#777" />
          </svg>
          <svg viewBox="0 0 17 14" className="ml-[7.500px] h-[14px] w-[17px]" fill="#fff">
            <path d="M5 4h8.500A1.500 1.500 0 0 1 15 5.500v6a1.500 1.500 0 0 1-1.500 1.500h-10A1.500 1.500 0 0 1 2 11.500V9l3-1z" stroke="#fff" /><path d="M16 7h1v3h-1zM4 0 0 6h2.500L1.500 9.500 5.500 4H3z" />
          </svg>
          <div className="ml-[16.500px] flex w-[57px] flex-col items-end text-[12px] leading-[16px]">
            <Fit w={23.500}>1:38</Fit>
            <Fit w={57}>2025/7/13</Fit>
          </div>
        </div>
      </div>
    </div>
  );
}

export default function App() {
  return (
    <div className="h-[1238px] w-[1865px] overflow-hidden bg-[#1b1a1f] pl-[95px] pt-[91px] font-['Open_Sans','Noto_Sans_CJK_SC',sans-serif]">
      <div className="flex h-[1086px] w-[1699px] flex-col overflow-hidden rounded-[18px] bg-[#e5e5ea]">
        <TitleBar />
        <TabRow />
        <Ribbon />
        <QuickAccess />
        <FormulaBar />
        <SheetArea />
        <SheetTabs />
        <StatusBar />
        <Taskbar />
      </div>
    </div>
  );
}
